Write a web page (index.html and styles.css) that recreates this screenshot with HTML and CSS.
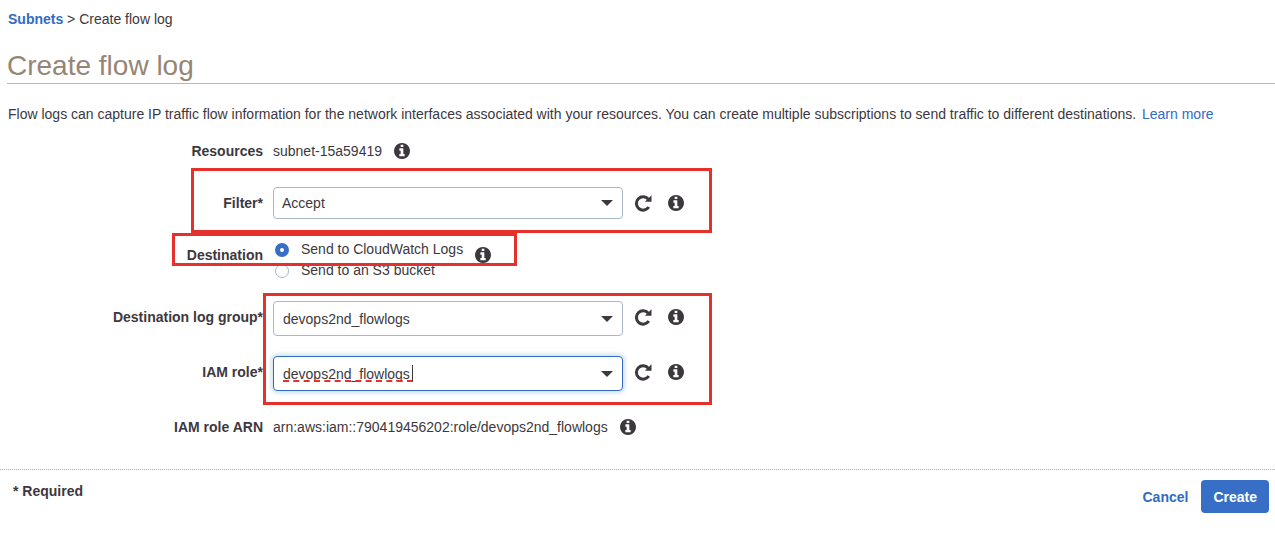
FILE: index.html
```html
<!DOCTYPE html>
<html lang="en">
<head>
<meta charset="utf-8">
<title>Create flow log</title>
<link rel="stylesheet" href="styles.css">
</head>
<body>
<svg class="sprite" aria-hidden="true">
  <symbol id="info" viewBox="128 128 1536 1536"><path d="M1152 1376v-160q0-14-9-23t-23-9h-96v-512q0-14-9-23t-23-9h-320q-14 0-23 9t-9 23v160q0 14 9 23t23 9h96v320h-96q-14 0-23 9t-9 23v160q0 14 9 23t23 9h448q14 0 23-9t9-23zm-128-896v-160q0-14-9-23t-23-9h-192q-14 0-23 9t-9 23v160q0 14 9 23t23 9h192q14 0 23-9t9-23zm640 416q0 209-103 385.500t-279.500 279.500-385.500 103-385.500-103-279.500-279.500-103-385.500 103-385.500 279.500-279.500 385.500-103 385.500 103 279.500 279.500 103 385.500z"/></symbol>
  <symbol id="refresh" viewBox="0 0 18 18"><path d="M14.300 5.200A6.700 6.700 0 1 0 14.800 13" fill="none" stroke="#3d383d" stroke-width="3"/><path d="M17.500 1.200v6.600h-6.600z"/></symbol>
</svg>

<header class="page-header">
  <nav class="breadcrumb" aria-label="Breadcrumb"><a class="crumb-link" href="#">Subnets</a> &gt; Create flow log</nav>
  <h1 class="title">Create flow log</h1>
</header>

<p class="intro">Flow logs can capture IP traffic flow information for the network interfaces associated with your resources. You can create multiple subscriptions to send traffic to different destinations. <a class="learn-more" href="#">Learn more</a></p>

<form>
  <div class="fields">
    <span class="label">Resources</span>
    <div class="field">
      <span class="value">subnet-15a59419</span>
      <button class="icon-button" type="button" aria-label="About resources"><svg class="icon-info"><use href="#info"/></svg></button>
    </div>

    <label class="label" for="filter">Filter*</label>
    <div class="field">
      <div class="control">
        <select class="box box-compact" id="filter"><option>Accept</option></select>
        <span class="arrow"></span>
      </div>
      <button class="icon-button reload" type="button" aria-label="Reload filters"><svg class="icon-refresh"><use href="#refresh"/></svg></button>
      <button class="icon-button" type="button" aria-label="About filter"><svg class="icon-info"><use href="#info"/></svg></button>
    </div>

    <span class="label" id="destination-label">Destination</span>
    <div class="field">
      <div class="choices" role="radiogroup" aria-labelledby="destination-label">
        <label class="choice"><input class="radio" type="radio" name="destination" checked>Send to CloudWatch Logs</label>
        <label class="choice"><input class="radio" type="radio" name="destination">Send to an S3 bucket</label>
      </div>
      <button class="icon-button" type="button" aria-label="About destination"><svg class="icon-info"><use href="#info"/></svg></button>
    </div>

    <label class="label" for="group">Destination log group*</label>
    <div class="field">
      <div class="control">
        <select class="box" id="group"><option>devops2nd_flowlogs</option></select>
        <span class="arrow"></span>
      </div>
      <button class="icon-button reload" type="button" aria-label="Reload log groups"><svg class="icon-refresh"><use href="#refresh"/></svg></button>
      <button class="icon-button" type="button" aria-label="About log group"><svg class="icon-info"><use href="#info"/></svg></button>
    </div>

    <label class="label" for="role">IAM role*</label>
    <div class="field">
      <div class="control">
        <input class="box box-active" id="role" type="text" value="devops2nd_flowlogs">
        <span class="misspelling"></span>
        <span class="arrow"></span>
      </div>
      <button class="icon-button reload" type="button" aria-label="Reload roles"><svg class="icon-refresh"><use href="#refresh"/></svg></button>
      <button class="icon-button" type="button" aria-label="About IAM role"><svg class="icon-info"><use href="#info"/></svg></button>
    </div>

    <span class="label">IAM role ARN</span>
    <div class="field">
      <span class="value">arn:aws:iam::790419456202:role/devops2nd_flowlogs</span>
      <button class="icon-button" type="button" aria-label="About role ARN"><svg class="icon-info"><use href="#info"/></svg></button>
    </div>

    <div class="highlight highlight-filter"></div>
    <div class="highlight highlight-destination"></div>
    <div class="highlight highlight-role"></div>
  </div>

  <footer class="footer">
    <span class="required">* Required</span>
    <div class="actions">
      <a class="cancel" href="#">Cancel</a>
      <button class="create" type="submit">Create</button>
    </div>
  </footer>
</form>
</body>
</html>
```

FILE: styles.css
```css
* { box-sizing: border-box; }

body {
  margin: 0;
  background: #fff;
  color: #3d383d;
  font: 14px/20px "Liberation Sans", Arial, sans-serif;
}

a { color: #2f6cc4; text-decoration: none; }
button { font: inherit; color: inherit; cursor: pointer; }

.sprite { display: none; }

.page-header { padding: 9px 0 0 7px; }
.breadcrumb { padding-left: 1px; }
.crumb-link { font-weight: bold; }

.title {
  margin: 20px 0 0;
  border-bottom: 1px solid #b0b9c6;
  color: #968575;
  font-size: 28px;
  font-weight: normal;
  line-height: 34px;
}

.intro { margin: 20px 8px 11px; }
.learn-more { margin-left: 2px; }

.fields {
  position: relative;
  display: grid;
  grid-template-columns: 263px 1fr;
  column-gap: 10px;
  row-gap: 20px;
  padding-bottom: 26px;
}

.label {
  font-weight: bold;
  line-height: 32px;
  text-align: right;
}

.field {
  display: flex;
  align-items: flex-start;
  gap: 12px;
}

.value { line-height: 32px; }

.control {
  position: relative;
  width: 350px;
}

.box {
  appearance: none;
  display: block;
  width: 100%;
  height: 35px;
  margin: 0;
  padding: 0 30px 0 9px;
  border: 1px solid #aab7c8;
  border-radius: 4px;
  outline: none;
  background: #fff;
  color: inherit;
  font: inherit;
}

.box-compact { height: 32px; padding-left: 8px; }

.box-active {
  border-color: #2f6cc4;
  box-shadow: 0 0 4px 2px #cfe0ec;
}

.arrow {
  position: absolute;
  top: 50%;
  right: 10px;
  margin-top: -3px;
  border: 6px solid transparent;
  border-top-color: #3d383d;
  border-bottom: 0;
  pointer-events: none;
}

.misspelling {
  position: absolute;
  top: 9px;
  left: 10px;
  width: 130px;
  height: 17px;
  border-right: 1px solid #3d383d;
  border-bottom: 2px dashed #e6302b;
  pointer-events: none;
}

.icon-button {
  display: flex;
  align-items: center;
  height: 32px;
  padding: 0;
  border: 0;
  background: none;
}

.reload { margin: 0 4px 0 -1px; }

.icon-info { width: 16px; height: 16px; fill: #3d383d; }
.icon-refresh { width: 18px; height: 18px; fill: #3d383d; }

.choice {
  display: flex;
  align-items: center;
  gap: 12px;
  line-height: 21px;
}

.radio {
  appearance: none;
  width: 14px;
  height: 14px;
  margin: 0 0 0 2px;
  border: 1px solid #aab7c8;
  border-radius: 50%;
  background: #fff;
}

.radio:checked {
  border: 5px solid #366fc5;
}

.highlight {
  position: absolute;
  border: 3px solid #e6302b;
  pointer-events: none;
}

.highlight-filter { top: 33px; left: 191px; width: 521px; height: 65px; }
.highlight-destination { top: 98px; left: 172px; width: 345px; height: 33px; }
.highlight-role { top: 158px; left: 263px; width: 449px; height: 112px; }

.footer {
  display: flex;
  justify-content: space-between;
  align-items: flex-start;
  padding: 10px 6px 20px 13px;
  border-top: 1px dotted #a3b4c6;
}

.required { font-weight: bold; line-height: 22px; }

.actions {
  display: flex;
  align-items: center;
  gap: 13px;
  font-weight: bold;
}

.create {
  height: 33px;
  padding: 0 12px;
  border: 0;
  border-radius: 4px;
  background: #366fc5;
  color: #fff;
}
```
